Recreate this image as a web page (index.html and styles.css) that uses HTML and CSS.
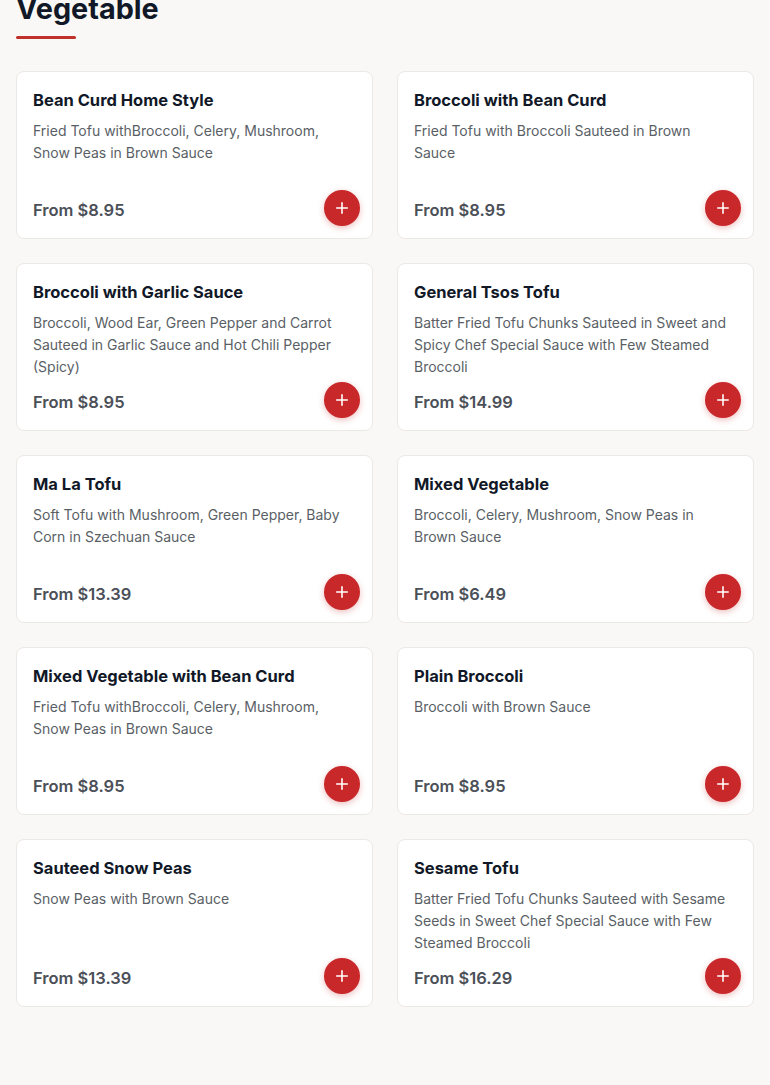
FILE: index.html
```html
<!DOCTYPE html>
<html lang="en">
<head>
    <meta charset="UTF-8">
    <meta name="viewport" content="width=device-width, initial-scale=1.0">
    <link rel="stylesheet" href="styles.css">
    <title>Vegetable</title>
</head>
<body>
    <main class="menu-section">
        <h2 class="section-title">Vegetable</h2>
        <div class="section-bar"></div>

        <div class="items">
            <article class="item">
                <h3 class="item-name">Bean Curd Home Style</h3>
                <p class="item-desc">Fried Tofu withBroccoli, Celery, Mushroom, Snow Peas in Brown Sauce</p>
                <p class="item-price">From $8.95</p>
                <button class="add-btn" aria-label="Add"><svg viewBox="0 0 16 16"><path d="M8 2v12M2 8h12"/></svg></button>
            </article>
            <article class="item">
                <h3 class="item-name">Broccoli with Bean Curd</h3>
                <p class="item-desc">Fried Tofu with Broccoli Sauteed in Brown Sauce</p>
                <p class="item-price">From $8.95</p>
                <button class="add-btn" aria-label="Add"><svg viewBox="0 0 16 16"><path d="M8 2v12M2 8h12"/></svg></button>
            </article>
            <article class="item">
                <h3 class="item-name">Broccoli with Garlic Sauce</h3>
                <p class="item-desc">Broccoli, Wood Ear, Green Pepper and Carrot Sauteed in Garlic Sauce and Hot Chili Pepper (Spicy)</p>
                <p class="item-price">From $8.95</p>
                <button class="add-btn" aria-label="Add"><svg viewBox="0 0 16 16"><path d="M8 2v12M2 8h12"/></svg></button>
            </article>
            <article class="item">
                <h3 class="item-name">General Tsos Tofu</h3>
                <p class="item-desc">Batter Fried Tofu Chunks Sauteed in Sweet and Spicy Chef Special Sauce with Few Steamed Broccoli</p>
                <p class="item-price">From $14.99</p>
                <button class="add-btn" aria-label="Add"><svg viewBox="0 0 16 16"><path d="M8 2v12M2 8h12"/></svg></button>
            </article>
            <article class="item">
                <h3 class="item-name">Ma La Tofu</h3>
                <p class="item-desc">Soft Tofu with Mushroom, Green Pepper, Baby Corn in Szechuan Sauce</p>
                <p class="item-price">From $13.39</p>
                <button class="add-btn" aria-label="Add"><svg viewBox="0 0 16 16"><path d="M8 2v12M2 8h12"/></svg></button>
            </article>
            <article class="item">
                <h3 class="item-name">Mixed Vegetable</h3>
                <p class="item-desc">Broccoli, Celery, Mushroom, Snow Peas in Brown Sauce</p>
                <p class="item-price">From $6.49</p>
                <button class="add-btn" aria-label="Add"><svg viewBox="0 0 16 16"><path d="M8 2v12M2 8h12"/></svg></button>
            </article>
            <article class="item">
                <h3 class="item-name">Mixed Vegetable with Bean Curd</h3>
                <p class="item-desc">Fried Tofu withBroccoli, Celery, Mushroom, Snow Peas in Brown Sauce</p>
                <p class="item-price">From $8.95</p>
                <button class="add-btn" aria-label="Add"><svg viewBox="0 0 16 16"><path d="M8 2v12M2 8h12"/></svg></button>
            </article>
            <article class="item">
                <h3 class="item-name">Plain Broccoli</h3>
                <p class="item-desc">Broccoli with Brown Sauce</p>
                <p class="item-price">From $8.95</p>
                <button class="add-btn" aria-label="Add"><svg viewBox="0 0 16 16"><path d="M8 2v12M2 8h12"/></svg></button>
            </article>
            <article class="item">
                <h3 class="item-name">Sauteed Snow Peas</h3>
                <p class="item-desc">Snow Peas with Brown Sauce</p>
                <p class="item-price">From $13.39</p>
                <button class="add-btn" aria-label="Add"><svg viewBox="0 0 16 16"><path d="M8 2v12M2 8h12"/></svg></button>
            </article>
            <article class="item">
                <h3 class="item-name">Sesame Tofu</h3>
                <p class="item-desc">Batter Fried Tofu Chunks Sauteed with Sesame Seeds in Sweet Chef Special Sauce with Few Steamed Broccoli</p>
                <p class="item-price">From $16.29</p>
                <button class="add-btn" aria-label="Add"><svg viewBox="0 0 16 16"><path d="M8 2v12M2 8h12"/></svg></button>
            </article>
        </div>
    </main>
</body>
</html>
```

FILE: styles.css
```css
html{
    box-sizing: border-box;
    font-family: Inter, "Noto Sans", sans-serif;
    font-size: 16px;
}
*,
*:before,
*:after{
    box-sizing: inherit;
}
body{
    margin: 0;
    min-height: 100vh;
    background-color: #f9f8f6;
    color: #111827;
    overflow: hidden;
}
.menu-section{
    padding: 0 16px 48px;
}
.section-title{
    margin: -9px 0 0;
    font-size: 28.8px;
    line-height: 36px;
    font-weight: 700;
    color: #111827;
}
.section-bar{
    width: 60px;
    height: 3px;
    margin-top: 9px;
    border-radius: 2px;
    background-color: #c0312c;
}
.items{
    display: grid;
    grid-template-columns: 1fr 1fr;
    gap: 24px;
    margin-top: 32px;
}
.item{
    position: relative;
    display: flex;
    flex-direction: column;
    min-height: 168px;
    padding: 16px 20px 16px 16px;
    background-color: #fff;
    border: 1px solid #ebe9e6;
    border-radius: 8px;
}
.item-name{
    margin: 0;
    font-size: 16.5px;
    line-height: 24px;
    font-weight: 700;
    color: #111827;
}
.item-desc{
    flex-grow: 1;
    margin: 8px 0 0;
    font-size: 14px;
    line-height: 22px;
    color: #5a5f66;
}
.item-price{
    margin: 12px 0 0;
    font-size: 16.5px;
    line-height: 24px;
    font-weight: 600;
    color: #4b5058;
}
.add-btn{
    position: absolute;
    right: 12px;
    bottom: 12px;
    width: 36px;
    height: 36px;
    padding: 0;
    border: 0;
    border-radius: 50%;
    background-color: #c8282a;
    box-shadow: 0 2px 6px rgba(200, 40, 42, .3);
    display: flex;
    align-items: center;
    justify-content: center;
    cursor: pointer;
}
.add-btn svg{
    width: 14px;
    height: 14px;
    fill: none;
    stroke: #fff;
    stroke-width: 1.8;
    stroke-linecap: round;
}
```
